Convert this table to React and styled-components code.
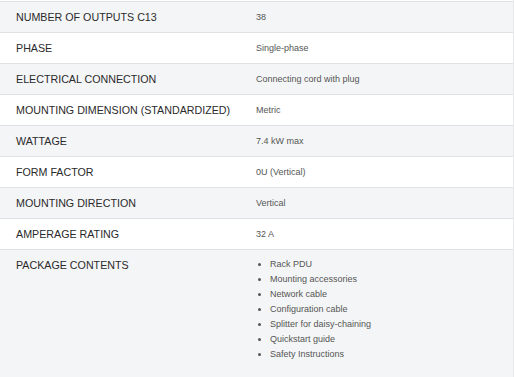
import React from 'react';
import styled, { createGlobalStyle } from 'styled-components';

const specs = [
  { label: 'Number of outputs C13', value: '38' },
  { label: 'Phase', value: 'Single-phase' },
  { label: 'Electrical connection', value: 'Connecting cord with plug' },
  { label: 'Mounting dimension (standardized)', value: 'Metric' },
  { label: 'Wattage', value: '7.4 kW max' },
  { label: 'Form factor', value: '0U (Vertical)' },
  { label: 'Mounting direction', value: 'Vertical' },
  { label: 'Amperage rating', value: '32 A' },
  {
    label: 'Package contents',
    list: [
      'Rack PDU',
      'Mounting accessories',
      'Network cable',
      'Configuration cable',
      'Splitter for daisy-chaining',
      'Quickstart guide',
      'Safety Instructions',
    ],
  },
];

const GlobalStyle = createGlobalStyle`
  body {
    margin: 0;
    background: #fff;
    font-family: "Liberation Sans", Arial, sans-serif;
  }
`;

const App = () => {
  return (
    <>
      <GlobalStyle />
      <Table>
        {specs.map((spec, i) => (
          <Row key={spec.label} shaded={i % 2 === 0}>
            <Label>{spec.label}</Label>
            {spec.list ? (
              <List>
                {spec.list.map((item) => (
                  <li key={item}>{item}</li>
                ))}
              </List>
            ) : (
              <Value>{spec.value}</Value>
            )}
          </Row>
        ))}
      </Table>
    </>
  );
};

const Table = styled.div`
  padding-top: 1px;
  border-right: 1px solid #e6e8ea;
`;

const Row = styled.div.withConfig({
  shouldForwardProp: (prop) => prop !== 'shaded',
})`
  display: grid;
  grid-template-columns: 256px 1fr;
  align-items: start;
  border-top: 1px solid #dfe1e4;
  background: ${(props) => (props.shaded ? '#f4f5f7' : '#ffffff')};
  min-height: 30px;
  &:last-child {
    padding-bottom: 20px;
  }
`;

const Label = styled.div`
  padding: 9px 16px;
  font-size: 10.7px;
  line-height: 12px;
  color: #2a2a2a;
  text-transform: uppercase;
`;

const Value = styled.div`
  padding: 9px 0;
  font-size: 9px;
  line-height: 12px;
  color: #555;
`;

const List = styled.ul`
  margin: 0;
  padding: 7px 0 0 14px;
  font-size: 9px;
  line-height: 15px;
  color: #555;
`;

export default App;
